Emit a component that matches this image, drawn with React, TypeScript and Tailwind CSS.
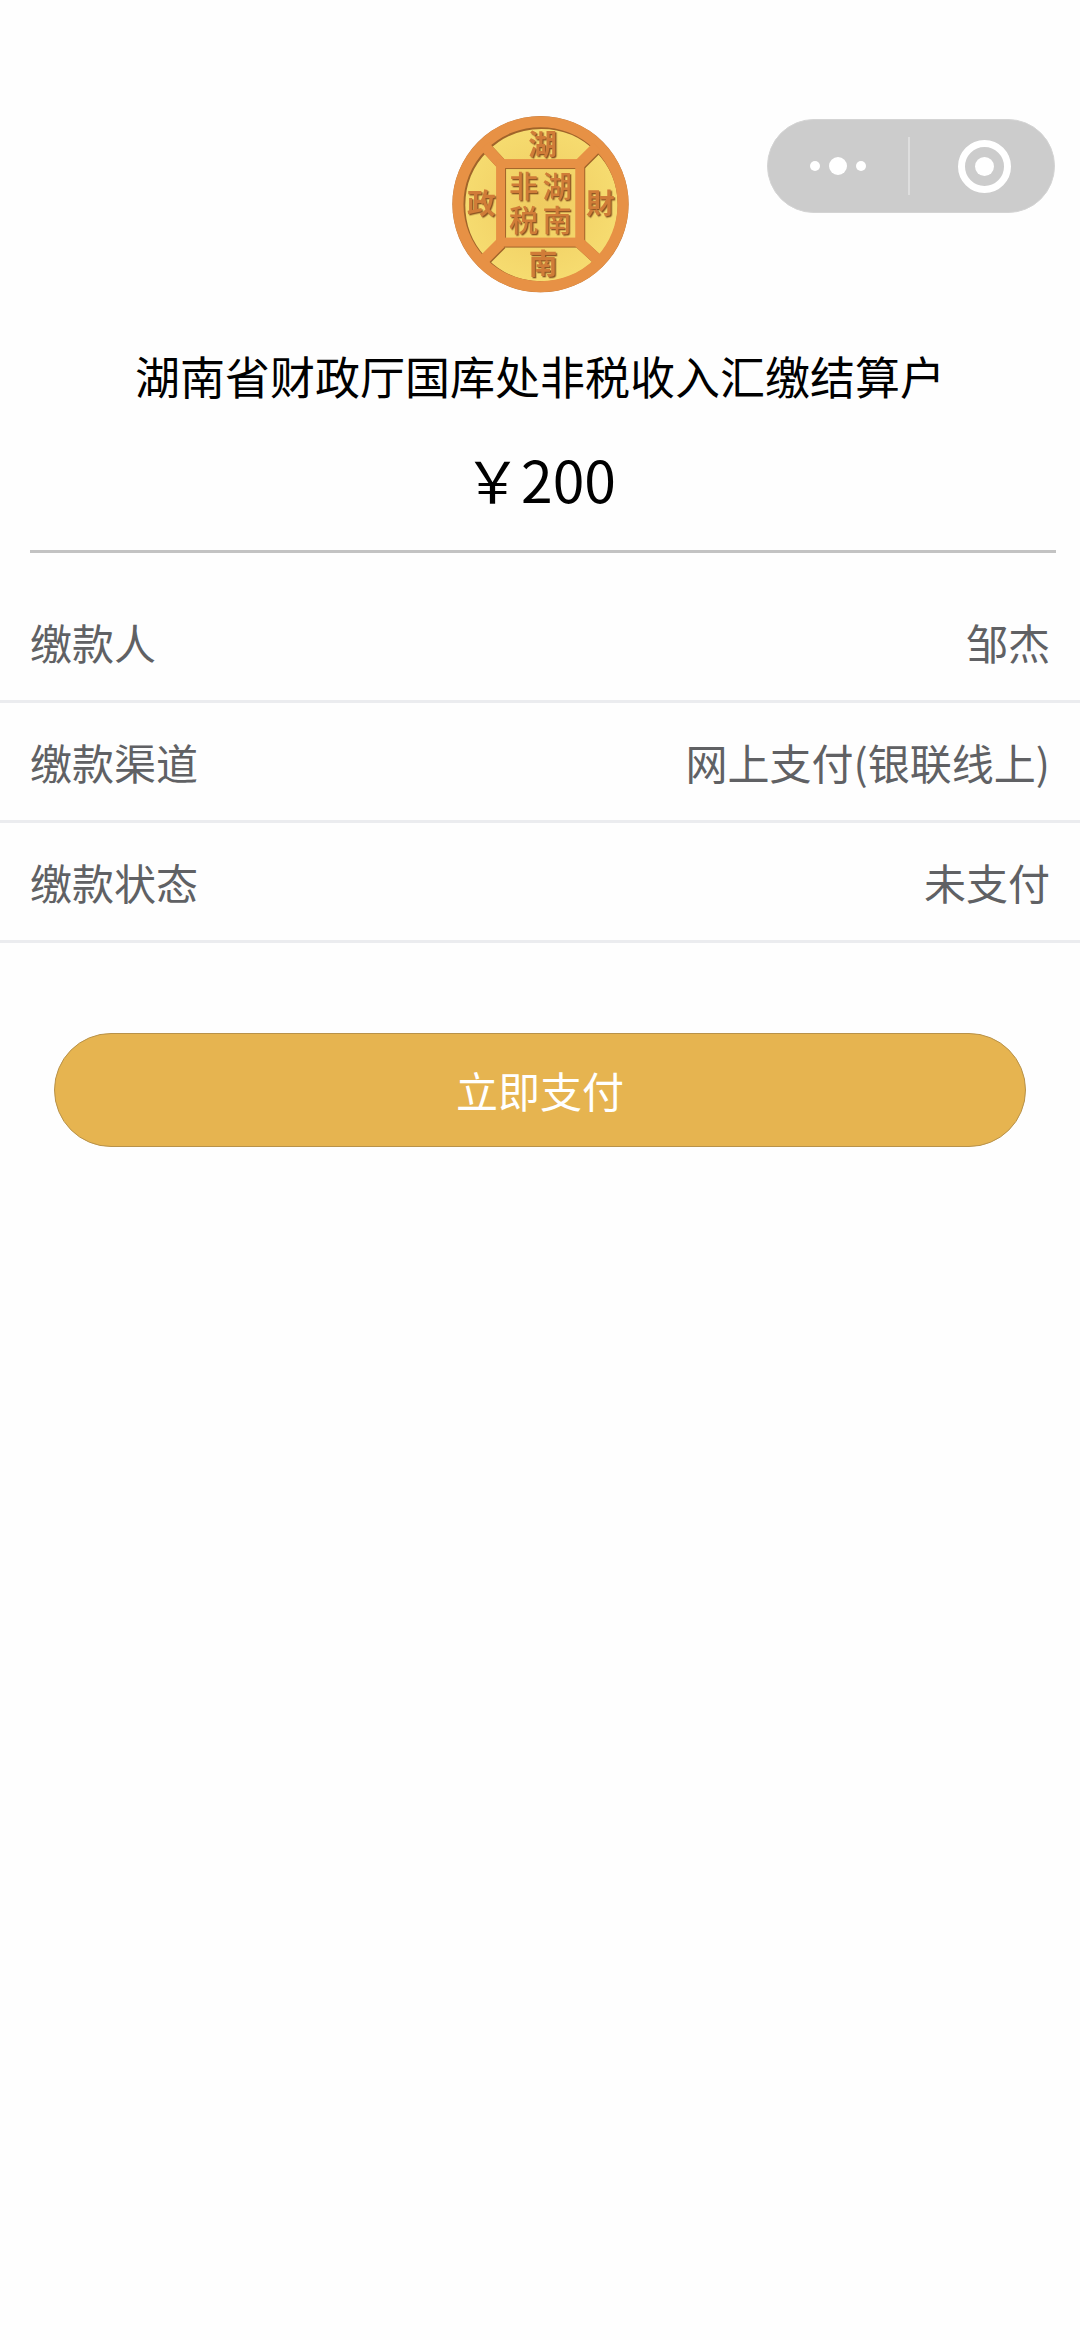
const rows = [
  { label: '缴款人', value: '邹杰' },
  { label: '缴款渠道', value: '网上支付(银联线上)' },
  { label: '缴款状态', value: '未支付' },
];

const coinRim = [
  { char: '湖', x: 306, y: 150 },
  { char: '南', x: 308, y: 508 },
  { char: '政', x: 122, y: 326 },
  { char: '財', x: 480, y: 326 },
];

const coinCore = [
  { char: '非', x: 249, y: 275 },
  { char: '湖', x: 350, y: 275 },
  { char: '税', x: 249, y: 378 },
  { char: '南', x: 350, y: 378 },
];

function CoinFrame() {
  return (
    <>
      <circle cx="300" cy="297" r="248" strokeWidth="33" />
      <path d="M132 122L182 176M470 124L418 176M132 462L180 414M470 462L416 412" strokeWidth="33" />
      <rect x="180" y="175" width="238" height="236" strokeWidth="27" />
    </>
  );
}

function CoinLogo() {
  return (
    <svg viewBox="34 32 532 532" className="size-[177px]" role="img" aria-label="湖南财政 湖南非税">
      <defs>
        <radialGradient id="face">
          <stop offset="0" stopColor="#efcb60" />
          <stop offset="1" stopColor="#f6dc70" />
        </radialGradient>
      </defs>
      <circle cx="300" cy="297" r="265" fill="#b9773f" />
      <circle cx="300" cy="297" r="240" fill="url(#face)" />
      <g fill="none" stroke="#a0642a" transform="translate(3 3)">
        <circle cx="300" cy="297" r="244" strokeWidth="30" />
        <path d="M132 122L182 176M470 124L418 176M132 462L180 414M470 462L416 412" strokeWidth="33" />
        <rect x="180" y="175" width="238" height="236" strokeWidth="27" />
      </g>
      <g fill="none" stroke="#e79145">
        <CoinFrame />
      </g>
      <g
        textAnchor="middle"
        fill="#d07c38"
        fontFamily='"Noto Sans CJK SC", sans-serif'
        className="drop-shadow-[4px_4px_0px_#8f5724]"
      >
        {coinRim.map((c) => (
          <text key={c.char} x={c.x} y={c.y} fontSize="86" fontWeight="700">{c.char}</text>
        ))}
        {coinCore.map((c) => (
          <text key={c.char} x={c.x} y={c.y} fontSize="88" fontWeight="500">{c.char}</text>
        ))}
      </g>
    </svg>
  );
}

function Capsule() {
  return (
    <div className="absolute right-[25px] top-[119px] flex h-[94px] w-[288px] items-center rounded-full border border-[#d4d4d4] bg-[#cccccc]">
      <button type="button" aria-label="更多" className="flex h-full flex-1 items-center justify-center gap-[9px]">
        <span className="size-[10px] rounded-full bg-white" />
        <span className="size-[18px] rounded-full bg-white" />
        <span className="size-[10px] rounded-full bg-white" />
      </button>
      <span className="h-[58px] w-[2px] bg-[#dedede]" />
      <button type="button" aria-label="关闭" className="flex h-full flex-1 items-center justify-center pl-1">
        <span className="flex size-[53px] items-center justify-center rounded-full border-7 border-white">
          <span className="size-[19px] rounded-full bg-white" />
        </span>
      </button>
    </div>
  );
}

export default function App() {
  return (
    <main
      lang="zh-CN"
      className="relative min-h-screen bg-[#fefefe] font-['Noto_Sans_CJK_SC',sans-serif]"
    >
      <Capsule />
      <header className="flex flex-col items-center pt-[116px] text-black">
        <CoinLogo />
        <h1 className="mt-[53px] text-[45px] leading-[60px]">湖南省财政厅国库处非税收入汇缴结算户</h1>
        <p className="mt-8 text-[57px] leading-[80px]">￥200</p>
      </header>
      <hr className="ml-[30px] mr-6 mt-8 border-t-3 border-[#c3c3c3]" />
      <dl className="mt-[30px] text-[42px] leading-[60px] text-[#606164]">
        {rows.map((row) => (
          <div
            key={row.label}
            className="flex h-[120px] items-center justify-between border-b-3 border-[#ebecef] px-[30px]"
          >
            <dt>{row.label}</dt>
            <dd>{row.value}</dd>
          </div>
        ))}
      </dl>
      <div className="mt-[90px] px-[54px]">
        <button
          type="button"
          className="h-[114px] w-full rounded-full border border-[#b8924a] bg-[#e6b450] text-[42px] leading-[60px] text-white"
        >
          立即支付
        </button>
      </div>
    </main>
  );
}
